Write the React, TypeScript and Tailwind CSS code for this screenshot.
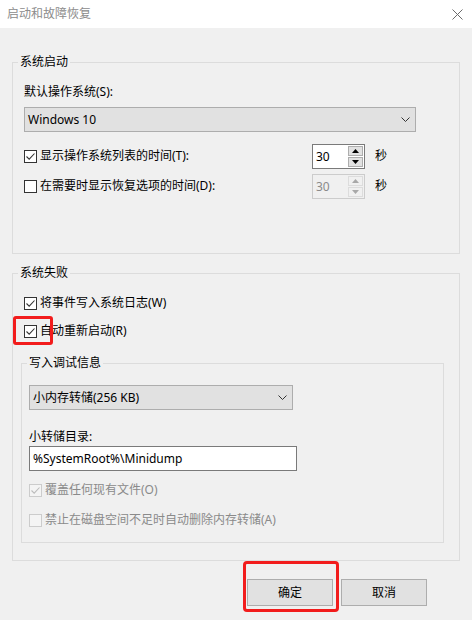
import React from 'react';

const font = { fontFamily: '"Noto Sans", "Noto Sans CJK SC", sans-serif' };

function Check({ checked = false, disabled = false }: { checked?: boolean; disabled?: boolean }) {
  return (
    <span
      className={
        'flex h-[13px] w-[13px] shrink-0 items-center justify-center border ' +
        (disabled ? 'border-[#cccccc] bg-[#f4f4f4]' : 'border-[#333333] bg-white')
      }
    >
      {checked && (
        <svg width="11" height="11" viewBox="0 0 11 11">
          <path
            d="M1.5 5.5 L4.2 8.2 L9.5 2.5"
            fill="none"
            stroke={disabled ? '#bcbcbc' : '#333333'}
            strokeWidth="1.1"
          />
        </svg>
      )}
    </span>
  );
}

function CheckRow({
  label,
  checked,
  disabled,
}: {
  label: string;
  checked?: boolean;
  disabled?: boolean;
}) {
  return (
    <div className="flex h-[16px] items-center gap-[3px]">
      <Check checked={checked} disabled={disabled} />
      <span className={'leading-[16px] ' + (disabled ? 'text-[#8a8a8a]' : 'text-black')}>{label}</span>
    </div>
  );
}

function Chevron() {
  return (
    <svg width="9" height="5" viewBox="0 0 9 5">
      <path d="M0.5 0.5 L4.5 4.5 L8.5 0.5" fill="none" stroke="#333" strokeWidth="1" />
    </svg>
  );
}

function Select({ value, width }: { value: string; width: string }) {
  return (
    <div
      className={
        'flex h-[25px] items-center justify-between border border-[#adadad] bg-[#e1e1e1] pl-[3px] pr-[5px] ' +
        width
      }
    >
      <span className="leading-[16px]">{value}</span>
      <Chevron />
    </div>
  );
}

function Spin({ disabled = false }: { disabled?: boolean }) {
  const tri = disabled ? '#a8a8a8' : '#000000';
  return (
    <div
      className={
        'flex h-[25px] w-[53px] border ' +
        (disabled ? 'border-[#cccccc] bg-[#f0f0f0]' : 'border-[#7a7a7a] bg-white')
      }
    >
      <span className={'flex-1 pl-[3px] leading-[23px] ' + (disabled ? 'text-[#8a8a8a]' : 'text-black')}>
        30
      </span>
      <div className="flex w-[17px] flex-col gap-[1px] p-[1px]">
        <div
          className={
            'flex flex-1 items-center justify-center border ' +
            (disabled ? 'border-[#dcdcdc] bg-[#f0f0f0]' : 'border-[#adadad] bg-[#e1e1e1]')
          }
        >
          <svg width="7" height="4" viewBox="0 0 7 4">
            <path d="M0 4 L3.5 0 L7 4 Z" fill={tri} />
          </svg>
        </div>
        <div
          className={
            'flex flex-1 items-center justify-center border ' +
            (disabled ? 'border-[#dcdcdc] bg-[#f0f0f0]' : 'border-[#adadad] bg-[#e1e1e1]')
          }
        >
          <svg width="7" height="4" viewBox="0 0 7 4">
            <path d="M0 0 L7 0 L3.5 4 Z" fill={tri} />
          </svg>
        </div>
      </div>
    </div>
  );
}

export default function App() {
  return (
    <div className="w-[472px] h-[620px] overflow-hidden text-[12px] text-black" style={font}>
      {/* title bar */}
      <div className="flex h-[28px] items-center justify-between bg-white pl-[7px] pr-[9px]">
        <span className="leading-[16px] text-[#8c8c8c]">启动和故障恢复</span>
        <svg width="11" height="11" viewBox="0 0 11 11">
          <path d="M0.5 0.5 L10.5 10.5 M10.5 0.5 L0.5 10.5" stroke="#6b6b6b" strokeWidth="1" />
        </svg>
      </div>

      <div className="h-[592px] bg-[#f0f0f0] px-[12px] pt-[26px]">
        {/* 系统启动 */}
        <fieldset className="h-[200px] border border-[#dcdcdc] pl-[11px]">
          <legend className="ml-[-6px] px-[2px] leading-[16px]">系统启动</legend>
          <div className="mt-[14px] leading-[16px]">默认操作系统(S):</div>
          <div className="mt-[7px]">
            <Select value="Windows 10" width="w-[392px]" />
          </div>
          <div className="mt-[11px] flex h-[26px] items-center">
            <div className="w-[288px]">
              <CheckRow label="显示操作系统列表的时间(T):" checked />
            </div>
            <Spin />
            <span className="ml-[10px] leading-[16px]">秒</span>
          </div>
          <div className="mt-[4px] flex h-[26px] items-center">
            <div className="w-[288px]">
              <CheckRow label="在需要时显示恢复选项的时间(D):" />
            </div>
            <Spin disabled />
            <span className="ml-[10px] leading-[16px]">秒</span>
          </div>
        </fieldset>

        {/* 系统失败 */}
        <fieldset className="mt-[11px] h-[296px] border border-[#dcdcdc] pl-[11px]">
          <legend className="ml-[-6px] px-[2px] leading-[16px]">系统失败</legend>
          <div className="mt-[14px]">
            <CheckRow label="将事件写入系统日志(W)" checked />
          </div>
          <div className="relative mt-[12px]">
            <CheckRow label="自动重新启动(R)" checked />
            <span className="pointer-events-none absolute left-[-11px] top-[-7px] h-[29px] w-[40px] rounded-[3px] border-[3px] border-[#f21c1c]" />
          </div>

          <fieldset className="ml-[-3px] mt-[16px] h-[188px] w-[423px] border border-[#dcdcdc] pl-[7px]">
            <legend className="ml-[-2px] px-[2px] leading-[16px]">写入调试信息</legend>
            <div className="mt-[14px]">
              <Select value="小内存转储(256 KB)" width="w-[264px]" />
            </div>
            <div className="mt-[19px] leading-[16px]">小转储目录:</div>
            <div className="mt-[1px] flex h-[25px] w-[268px] items-center border border-[#7a7a7a] bg-white pl-[3px]">
              <span className="leading-[16px]">%SystemRoot%\Minidump</span>
            </div>
            <div className="mt-[11px]">
              <CheckRow label="覆盖任何现有文件(O)" checked disabled />
            </div>
            <div className="mt-[14px]">
              <CheckRow label="禁止在磁盘空间不足时自动删除内存转储(A)" disabled />
            </div>
          </fieldset>
        </fieldset>

        {/* buttons */}
        <div className="mt-[18px] flex justify-end gap-[8px] pr-[33px]">
          <div className="relative">
            <button className="h-[27px] w-[86px] border border-[#adadad] bg-[#e1e1e1] leading-[16px]">确定</button>
            <span className="pointer-events-none absolute left-[-4px] top-[-18px] h-[51px] w-[96px] rounded-[4px] border-[3px] border-[#f21c1c]" />
          </div>
          <button className="h-[27px] w-[86px] border border-[#adadad] bg-[#e1e1e1] leading-[16px]">取消</button>
        </div>
      </div>
    </div>
  );
}
